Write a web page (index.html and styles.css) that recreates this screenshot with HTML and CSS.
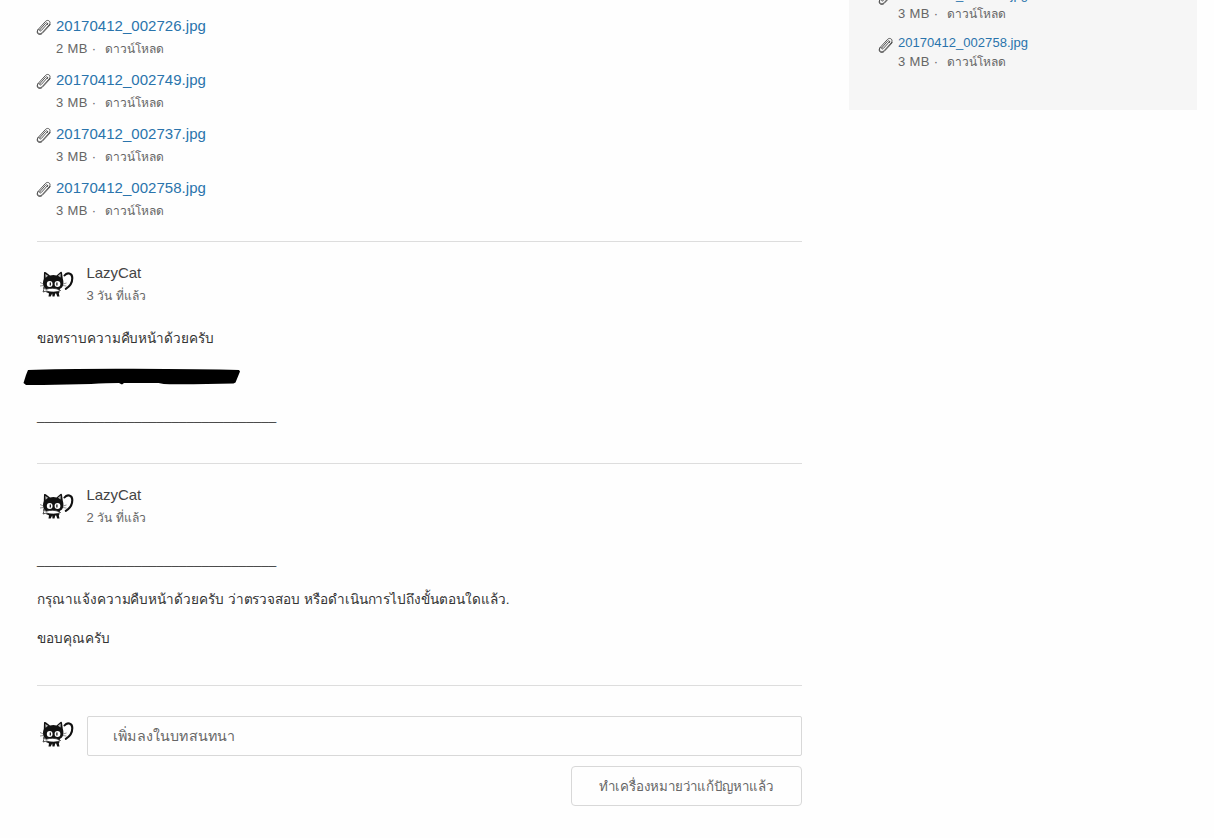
FILE: index.html
```html
<!DOCTYPE html>
<html lang="th">
<head>
  <meta charset="UTF-8" />
  <title>LazyCat</title>
  <meta name="viewport" content="width=device-width, initial-scale=1" />
  <link rel="stylesheet" href="styles.css">
</head>
<body>

  <!-- Shared icons -->
  <svg class="sprite" aria-hidden="true">
    <symbol id="clip" viewBox="0 0 16 17">
      <path d="M13.500 5.500 6.200 13.600C3.600 16.500-.2 13.500 2.200 10.400L9.300 2.600c2.600-2.900 6.400.2 4.200 2.900M11.500 4.600 5.300 11.500c-1.300 1.200-2.300.1-1.400-1M4 10.500l5.500-6.200c1.300-1.300 3-.1 2 1.300M2.200 10.400c-2 2.800-.7 5 1.300 5.100 1.500.1 2.300-.6 3.300-1.700L14.300 5.700" fill="none" stroke="#444" stroke-width="0.9" stroke-linecap="round" />
    </symbol>
    <symbol id="cat" viewBox="0 0 40 40">
      <path d="M27.500 11.500c2.500-3.500 7.800-2.500 7.800 2.500 0 4.500-2.500 8.500-6.500 10.800" fill="none" stroke="#111" stroke-width="2.100" stroke-linecap="round" />
      <path d="M7 8.300q.8-.8 1.800 0L13 11.500q3.500-.8 6.500 0L23.500 8q1.300-.6 1.500.8l.8 6c1.500 5 .2 9-2.800 10l-1 3.700H9.500L9 25C5.800 23.500 5.300 19 6.800 15z" fill="#111" />
      <path d="m8.300 10 .3 3.800 2.500-2zM23.700 9.500l-2.800 2.300 2.700 1.800z" fill="#bbb" />
      <ellipse cx="12.700" cy="20" rx="2.900" ry="3" fill="#fff" />
      <ellipse cx="20.500" cy="20" rx="2.900" ry="3" fill="#fff" />
      <path d="M13.300 18.500v3M19.900 18.500v3" stroke="#111" stroke-width="1.200" />
      <path d="M3 18.500 6.500 20M3 22l3.500-.5M26 20l3.500-1M26 21.500l3.500.6" stroke="#777" stroke-width=".8" />
      <path d="m6.500 23.500 2.500 1.800c4-1.500 9.500-1.300 13 .4l1.500.8c-4 2-10 2-14 .5L6 28l.8-2.200z" fill="#fff" stroke="#222" stroke-width=".8" />
      <path d="M10 28h12.500l-.7 1.500.7 3h-2.300l-1-3h-1l-.7 3h-2l-.3-3-1.500 3H11.500l.5-3z" fill="#111" />
    </symbol>
  </svg>

  <div class="page">
    <main class="conversation">
      <ul class="files">
        <li class="file">
          <svg class="clip"><use href="#clip" /></svg>
          <div>
            <a href="#" class="file-name">20170412_002726.jpg</a>
            <p class="file-meta">2 MB · <span class="download">ดาวน์โหลด</span></p>
          </div>
        </li>
        <li class="file">
          <svg class="clip"><use href="#clip" /></svg>
          <div>
            <a href="#" class="file-name">20170412_002749.jpg</a>
            <p class="file-meta">3 MB · <span class="download">ดาวน์โหลด</span></p>
          </div>
        </li>
        <li class="file">
          <svg class="clip"><use href="#clip" /></svg>
          <div>
            <a href="#" class="file-name">20170412_002737.jpg</a>
            <p class="file-meta">3 MB · <span class="download">ดาวน์โหลด</span></p>
          </div>
        </li>
        <li class="file">
          <svg class="clip"><use href="#clip" /></svg>
          <div>
            <a href="#" class="file-name">20170412_002758.jpg</a>
            <p class="file-meta">3 MB · <span class="download">ดาวน์โหลด</span></p>
          </div>
        </li>
      </ul>

      <article class="comment">
        <header class="author">
          <svg class="avatar"><use href="#cat" /></svg>
          <div>
            <h2 class="author-name">LazyCat</h2>
            <p class="time">3 <span class="time-th">วัน ที่แล้ว</span></p>
          </div>
        </header>
        <p class="text">ขอทราบความคืบหน้าด้วยครับ</p>
        <svg class="marker" viewBox="0 0 218 18">
          <path d="M5 2Q40 .6 110 .8T216 2l1 1.500-4.500 11-2 1-40 .7h-24q-6 0-11-1.300H101l-2 1.500-3-1.500q-12 0-28 1l-48 1H3L.5 15 3 7z" />
        </svg>
        <p class="line">________________________________</p>
      </article>

      <article class="comment">
        <header class="author">
          <svg class="avatar"><use href="#cat" /></svg>
          <div>
            <h2 class="author-name">LazyCat</h2>
            <p class="time">2 <span class="time-th">วัน ที่แล้ว</span></p>
          </div>
        </header>
        <p class="line line-first">________________________________</p>
        <p class="text">กรุณาแจ้งความคืบหน้าด้วยครับ ว่าตรวจสอบ หรือดำเนินการไปถึงขั้นตอนใดแล้ว.</p>
        <p class="text">ขอบคุณครับ</p>
      </article>

      <form class="reply">
        <svg class="avatar"><use href="#cat" /></svg>
        <div class="reply-fields">
          <div class="reply-input">เพิ่มลงในบทสนทนา</div>
          <button type="button" class="solved">ทำเครื่องหมายว่าแก้ปัญหาแล้ว</button>
        </div>
      </form>
    </main>

    <aside class="sidebar">
      <ul class="files files-small">
        <li class="file">
          <svg class="clip"><use href="#clip" /></svg>
          <div>
            <a href="#" class="file-name">20170412_002737.jpg</a>
            <p class="file-meta">3 MB · <span class="download">ดาวน์โหลด</span></p>
          </div>
        </li>
        <li class="file">
          <svg class="clip"><use href="#clip" /></svg>
          <div>
            <a href="#" class="file-name">20170412_002758.jpg</a>
            <p class="file-meta">3 MB · <span class="download">ดาวน์โหลด</span></p>
          </div>
        </li>
      </ul>
    </aside>
  </div>

</body>
</html>
```
FILE: styles.css
```css
/* Reset and base */
* {
  box-sizing: border-box;
  margin: 0;
  padding: 0;
}
body {
  height: 838px;
  overflow: hidden;
  font-family: "Liberation Sans", Arial, sans-serif;
  font-size: 14px;
  line-height: 22px;
  color: #333;
  background: #fefefe;
}
ul {
  list-style: none;
}
.sprite {
  display: none;
}

.page {
  display: flex;
  align-items: flex-start;
  gap: 47px;
  padding-left: 37px;
}
.conversation {
  width: 765px;
  padding-top: 15px;
}

/* Attachments */
.files {
  display: flex;
  flex-direction: column;
  gap: 10px;
  margin-bottom: 20px;
}
.file {
  display: flex;
  gap: 4px;
  height: 44px;
}
.clip {
  width: 16px;
  height: 17px;
  margin: 4px 0 0 -1px;
}
.file-name {
  display: block;
  font-size: 15px;
  letter-spacing: 0.03px;
  color: #2a74ac;
  text-decoration: none;
}
.file-meta {
  font-size: 13px;
  line-height: 24px;
  letter-spacing: 0.35px;
  color: #666;
  white-space: nowrap;
}
.download {
  margin-left: 5px;
  font-size: 12px;
  letter-spacing: 0;
}

/* Comments */
.comment {
  height: 222px;
  padding-top: 20px;
  border-top: 1px solid #ddd;
}
.author {
  display: flex;
  gap: 9.5px;
  height: 45px;
  margin-bottom: 20px;
}
.avatar {
  width: 40px;
  height: 40px;
  flex-shrink: 0;
}
.author .avatar {
  margin-top: 2px;
}
.author-name {
  font-size: 15px;
  font-weight: normal;
  letter-spacing: -0.05px;
  color: #444;
}
.time {
  font-size: 13px;
  line-height: 23px;
  color: #666;
}
.time-th {
  font-size: 12.1px;
}
.text {
  height: 22px;
  margin-bottom: 17px;
  font-size: 13.55px;
  line-height: 24px;
  letter-spacing: -0.05px;
  white-space: nowrap;
}
.marker {
  display: block;
  width: 218px;
  height: 18px;
  margin: 19px 0 19px -14px;
}
.line {
  height: 22px;
  font-size: 13.45px;
}
.line-first {
  margin-bottom: 17px;
}

/* Reply form */
.reply {
  display: flex;
  gap: 10px;
  padding-top: 30px;
  border-top: 1px solid #ddd;
}
.reply .avatar {
  margin-top: -2px;
}
.reply-fields {
  display: flex;
  flex-direction: column;
  flex-grow: 1;
  gap: 10px;
}
.reply-input {
  height: 40px;
  padding: 8px 25px;
  border: 1px solid #d8d8d8;
  border-radius: 2px;
  font-size: 14.25px;
  letter-spacing: 0.17px;
  color: #666;
}
.solved {
  align-self: flex-end;
  width: 231px;
  height: 40px;
  padding: 1px 2px 0 0;
  border: 1px solid #d8d8d8;
  border-radius: 4px;
  background: none;
  font: inherit;
  font-size: 13.3px;
  color: #666;
  white-space: nowrap;
}

/* Sidebar */
.sidebar {
  width: 348px;
  height: 110px;
  padding-left: 30px;
  background: #f6f6f6;
}
.files-small {
  margin-top: -15px;
}
.files-small .file {
  height: 38px;
}
.files-small .file-name {
  font-size: 13px;
  line-height: 19px;
}
.files-small .file-meta {
  line-height: 19px;
}
```
